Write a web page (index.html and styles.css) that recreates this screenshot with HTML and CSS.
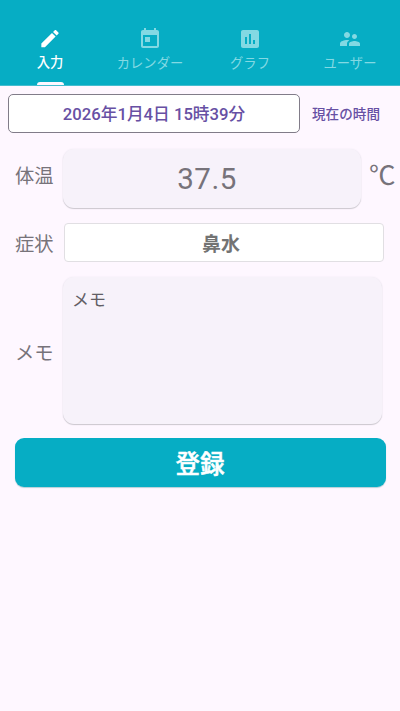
FILE: index.html
```html
<!DOCTYPE html>
<html lang="ja">
<head>
<meta charset="utf-8">
<title>体温記録</title>
<link rel="stylesheet" href="styles.css">
</head>
<body>
<nav class="tabs">
  <div class="tab active">
    <svg viewBox="0 0 24 24"><path d="M3 17.25V21h3.75L17.81 9.94l-3.75-3.75L3 17.25zM20.71 7.04c.39-.39.39-1.02 0-1.41l-2.34-2.34c-.39-.39-1.02-.39-1.41 0l-1.83 1.83 3.75 3.75 1.83-1.83z"/></svg>
    <span>入力</span>
  </div>
  <div class="tab">
    <svg viewBox="0 0 24 24"><path d="M19 3h-1V1h-2v2H8V1H6v2H5c-1.11 0-2 .9-2 2v14c0 1.1.89 2 2 2h14c1.1 0 2-.9 2-2V5c0-1.1-.9-2-2-2zm0 16H5V8h14v11zM7 10h5v5H7z"/></svg>
    <span>カレンダー</span>
  </div>
  <div class="tab">
    <svg viewBox="0 0 24 24"><path d="M19 3H5c-1.1 0-2 .9-2 2v14c0 1.1.9 2 2 2h14c1.1 0 2-.9 2-2V5c0-1.1-.9-2-2-2zM9 17H7v-7h2v7zm4 0h-2V7h2v10zm4 0h-2v-4h2v4z"/></svg>
    <span>グラフ</span>
  </div>
  <div class="tab">
    <svg viewBox="0 0 24 24"><path d="M16.5 12c1.38 0 2.49-1.12 2.49-2.5S17.88 7 16.5 7 14 8.12 14 9.5s1.12 2.5 2.5 2.5zM9 11c1.66 0 2.99-1.34 2.99-3S10.66 5 9 5 6 6.34 6 8s1.34 3 3 3zm7.5 3c-1.83 0-5.5.92-5.5 2.75V19h11v-2.25c0-1.83-3.67-2.75-5.5-2.75zM9 13c-2.33 0-7 1.17-7 3.5V19h7v-2.25c0-.85.33-2.34 2.37-3.47C10.5 13.1 9.66 13 9 13z"/></svg>
    <span>ユーザー</span>
  </div>
</nav>
<main>
  <div class="date-row">
    <button class="date">2026年1月4日 15時39分</button>
    <button class="now">現在の時間</button>
  </div>
  <div class="row temp-row">
    <span class="label">体温</span>
    <div class="card temp">37.5</div>
    <span class="unit">℃</span>
  </div>
  <div class="row symptom-row">
    <span class="label">症状</span>
    <div class="symptom">鼻水</div>
  </div>
  <div class="row memo-row">
    <span class="label">メモ</span>
    <div class="card memo">メモ</div>
  </div>
  <button class="submit">登録</button>
</main>
</body>
</html>
```

FILE: styles.css
```css
* { box-sizing: border-box; }

body {
  margin: 0;
  min-height: 711px;
  background: #fef7ff;
  color: #77737a;
  font-family: Roboto, "Noto Sans CJK JP", sans-serif;
}

button {
  border: 0;
  padding: 0;
  background: none;
  font-family: inherit;
  white-space: nowrap;
}

.tabs {
  display: flex;
  height: 86px;
  padding-top: 27px;
  background: #06adc4;
  border-bottom: 1px solid #45bdcf;
}

.tab {
  flex: 1;
  display: flex;
  flex-direction: column;
  align-items: center;
  color: #83d9e3;
  font-size: 13.3px;
  line-height: 20px;
}

.tab svg {
  width: 24px;
  height: 24px;
  margin-bottom: 3px;
  fill: currentColor;
}

.tab.active { color: #fff; font-weight: 500; }

.tab.active::after {
  content: "";
  width: 27px;
  height: 3px;
  margin-top: 9px;
  border-radius: 3px 3px 0 0;
  background: #fef7ff;
}

.date-row {
  display: flex;
  margin: 8px 8px 0;
}

.date {
  width: 292px;
  height: 39px;
  padding-bottom: 2px;
  border: 1px solid #817c89;
  border-radius: 5px;
  background: #fff;
  color: #6750a4;
  font-size: 16.7px;
  font-weight: 500;
}

.now {
  width: 92px;
  padding-bottom: 2px;
  color: #6750a4;
  font-size: 13.6px;
  font-weight: 500;
}

.row { display: flex; }

.label {
  width: 48px;
  align-self: center;
  font-size: 19.3px;
  line-height: 28px;
}

.card {
  background: #f7f2fa;
  border-radius: 11px;
  box-shadow: 0 1px 1px #cbc7ce, 0 0 2px #eee8f1;
}

.temp-row {
  height: 59px;
  margin: 16px 0 0 15px;
}

.temp-row .label { padding-bottom: 4px; }

.temp {
  width: 298px;
  padding-right: 10px;
  font-size: 29.5px;
  letter-spacing: 0.5px;
  line-height: 60px;
  text-align: center;
}

.temp-row .unit {
  margin-left: 8px;
  font-family: "Noto Sans CJK JP", sans-serif;
  font-size: 26.5px;
  line-height: 49px;
}

.symptom-row {
  height: 39px;
  margin: 15px 16px 0 15px;
}

.symptom-row .label { padding-top: 4px; }

.symptom {
  flex: 1;
  margin-left: 1px;
  padding-right: 6px;
  border: 1px solid #e1dfe3;
  border-radius: 4px;
  background: #fff;
  font-size: 19px;
  font-weight: 700;
  line-height: 41px;
  text-align: center;
  color: #737373;
}

.memo-row {
  height: 147px;
  margin: 15px 18px 0 15px;
}

.memo-row .label { padding-top: 6px; }

.memo {
  flex: 1;
  padding: 9px 9px;
  color: #625e65;
  font-size: 17px;
  line-height: 28px;
}

.submit {
  display: block;
  width: 371px;
  height: 49px;
  margin: 14px 0 0 14.5px;
  padding-top: 5px;
  border-radius: 9px;
  background: #06adc4;
  box-shadow: 0 1px 1px #b5cfd8;
  color: #fff;
  font-size: 24.5px;
  font-weight: 500;
  -webkit-text-stroke: 0.5px #fff;
  line-height: 44px;
}
```
